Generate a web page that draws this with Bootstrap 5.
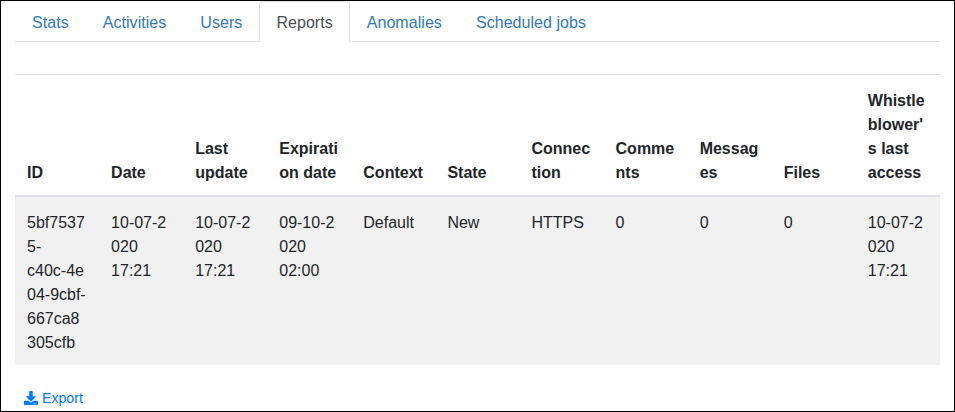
<!DOCTYPE html>
<html lang="en"><head><meta charset="utf-8"><title>Reports</title>
<link href="https://cdn.jsdelivr.net/npm/bootstrap@5.3.0/dist/css/bootstrap.min.css" rel="stylesheet">
<style>
body{font-family:"Liberation Sans",Arial,sans-serif;color:#212529;font-size:16px;line-height:24px}
.frame{height:412px;border:1px solid #000;overflow:hidden;padding:0 14px}
.nav-tabs{--bs-nav-link-color:#337ab7;--bs-nav-link-padding-x:16px;--bs-nav-tabs-border-radius:4px;--bs-nav-tabs-link-active-color:#495057;height:41px;letter-spacing:.05px}
.nav-tabs .nav-link{height:41px;padding-top:9px;padding-bottom:7px}
.reports{table-layout:fixed;margin-top:32px;border-top:1px solid #dee2e6}
.reports>:not(caption)>*>*{padding:14px 12px 10px;border:0}
.reports>thead>tr>th{vertical-align:bottom;border-bottom:2px solid #dee2e6}
.reports>tbody>tr>td{background:#f1f1f1;box-shadow:none;vertical-align:top}
.export{color:#007bff;font-size:14px;line-height:21px;margin:22px 0 0 9px;letter-spacing:.08px}
.export span{padding-top:1px;margin-bottom:-1px}
</style></head><body>
<div class="frame">
<ul class="nav nav-tabs">
<li class="nav-item"><a class="nav-link" href="#">Stats</a></li>
<li class="nav-item"><a class="nav-link" href="#">Activities</a></li>
<li class="nav-item"><a class="nav-link" href="#">Users</a></li>
<li class="nav-item"><a class="nav-link active" href="#">Reports</a></li>
<li class="nav-item"><a class="nav-link" href="#">Anomalies</a></li>
<li class="nav-item"><a class="nav-link" href="#">Scheduled jobs</a></li>
</ul>
<table class="table reports mb-0">
<thead><tr><th>ID</th><th>Date</th><th>Last update</th><th>Expirati<wbr>on date</th><th>Context</th><th>State</th><th>Connec<wbr>tion</th><th>Comme<wbr>nts</th><th>Messag<wbr>es</th><th>Files</th><th>Whistle<wbr>blower'<wbr>s last access</th></tr></thead>
<tbody><tr><td>5bf7537<br>5-<br>c40c-4e<br>04-9cbf-<br>667ca8<br>305cfb</td><td>10-07-2<br>020 17:21</td><td>10-07-2<br>020 17:21</td><td>09-10-2<br>020 02:00</td><td>Default</td><td>New</td><td>HTTPS</td><td>0</td><td>0</td><td>0</td><td>10-07-2<br>020 17:21</td></tr></tbody>
</table>
<a class="export d-inline-flex align-items-center gap-1 text-decoration-none" href="#"><svg width="14" height="14" viewBox="0 0 512 512" fill="currentColor" aria-hidden="true"><path d="M216 0h80c13.300 0 24 10.700 24 24v168h87.700c17.800 0 26.700 21.500 14.100 34.100L269.700 378.300c-7.500 7.500-19.800 7.500-27.300 0L90.100 226.100c-12.600-12.600-3.700-34.100 14.100-34.100H192V24c0-13.300 10.700-24 24-24zm296 376v112c0 13.300-10.700 24-24 24H24c-13.300 0-24-10.700-24-24V376c0-13.300 10.700-24 24-24h146.700l49 49c20.100 20.100 52.500 20.100 72.600 0l49-49H488c13.300 0 24 10.700 24 24zm-124 88c0-11-9-20-20-20s-20 9-20 20 9 20 20 20 20-9 20-20zm64 0c0-11-9-20-20-20s-20 9-20 20 9 20 20 20 20-9 20-20z"/></svg><span>Export</span></a>
</div>
<script src="https://cdn.jsdelivr.net/npm/bootstrap@5.3.0/dist/js/bootstrap.bundle.min.js"></script>
</body></html>
